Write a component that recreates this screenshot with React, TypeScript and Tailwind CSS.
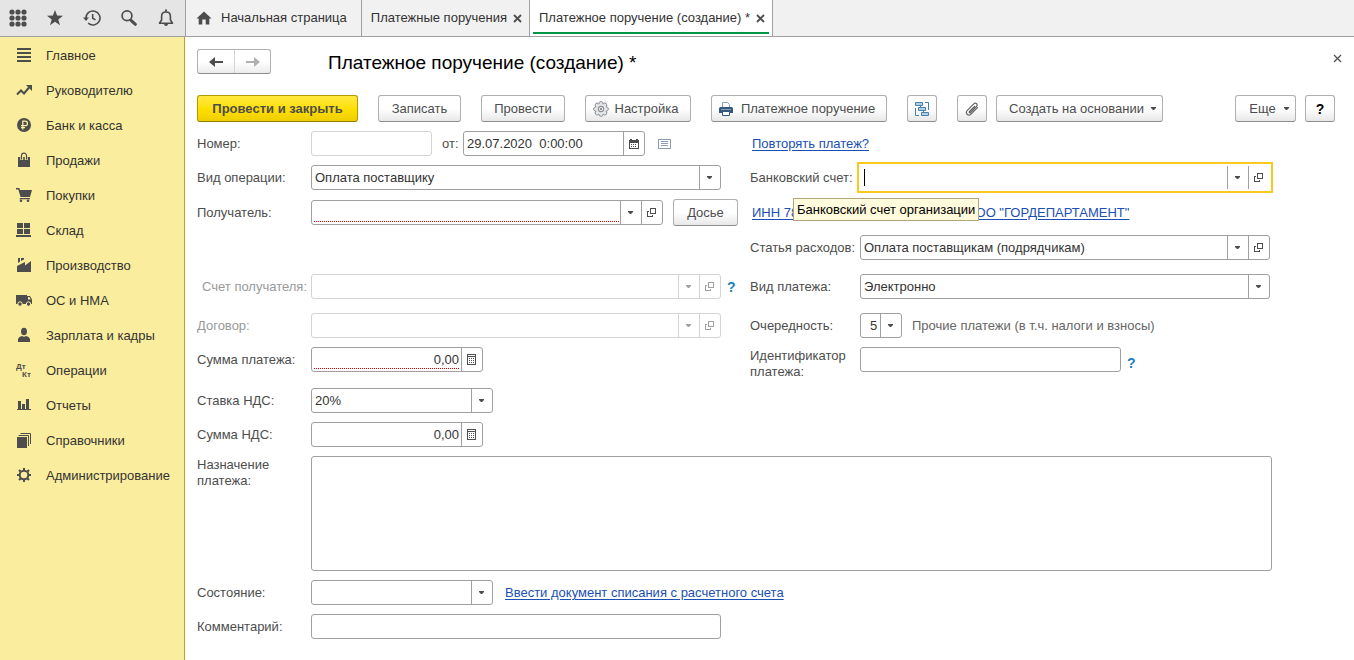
import { useState } from "react";
import type { ReactNode } from "react";
import clsx from "clsx";

const Icon = ({ size = 16, children, className }: { size?: number; children: ReactNode; className?: string }) => (
  <svg
    width={size}
    height={size}
    viewBox={`0 0 ${size} ${size}`}
    fill="currentColor"
    className={clsx("shrink-0", className)}
    aria-hidden="true"
  >
    {children}
  </svg>
);

const CaretIcon = () => (
  <svg width="5" height="3" viewBox="0 0 5 3" fill="currentColor" className="shrink-0" aria-hidden="true">
    <path d="M0 0h5v1L3 3H2L0 1z" />
  </svg>
);

const OpenIcon = () => (
  <Icon size={9}>
    <path d="M3 0h6v6H3zM4 1v4h4V1z" fillRule="evenodd" />
    <path d="M0 3h2v1H1v4h4V7h1v2H0z" />
  </Icon>
);

const CalcIcon = () => (
  <Icon size={11}>
    <path d="M1 0h9v11H1zM2 1v1h7V1zM2 3v7h7V3z" fillRule="evenodd" />
    <path d="M3 4h1v1H3zM5 4h1v1H5zM7 4h1v1H7zM3 6h1v1H3zM5 6h1v1H5zM7 6h1v1H7zM3 8h1v1H3zM5 8h1v1H5zM7 8h1v1H7z" />
  </Icon>
);

const CalendarIcon = () => (
  <Icon size={10}>
    <path d="M1 0h2v1h4V0h2v1h1v9H0V1h1zM1 4v5h8V4z" fillRule="evenodd" />
    <path d="M2 5h1v1H2zM4 5h1v1H4zM6 5h1v1H6zM2 7h1v1H2zM4 7h1v1H4zM6 7h1v1H6z" />
  </Icon>
);

const CloseIcon = ({ thin }: { thin?: boolean }) => (
  <svg
    width="9"
    height="9"
    viewBox="0 0 9 9"
    fill="none"
    stroke="#4d4d4d"
    strokeWidth={thin ? 1.2 : 1.8}
    aria-hidden="true"
  >
    <path d="M1 1l7 7M8 1L1 8" />
  </svg>
);

const topIcons = [
  {
    label: "Меню функций",
    icon: (
      <Icon size={18}>
        {[3, 9, 15].map((y) => [3, 9, 15].map((x) => <circle key={`${x}-${y}`} cx={x} cy={y} r="2.6" />))}
      </Icon>
    ),
  },
  {
    label: "Избранное",
    icon: (
      <Icon size={18}>
        <path d="M9 1l2.1 5.6 5.9.2-4.7 3.6 1.7 5.8L9 12.8l-5 3.4 1.7-5.8L1 6.800l5.900-.2z" />
      </Icon>
    ),
  },
  {
    label: "История",
    icon: (
      <Icon size={18}>
        <g fill="none" stroke="currentColor" strokeWidth="1.6">
          <path d="M3 9a7 7 0 1 1 2.2 5.1" />
          <path d="M9.7 5v4.3l2.8 1.6" />
        </g>
        <path d="M0 8.4h6L3 12z" />
      </Icon>
    ),
  },
  {
    label: "Поиск",
    icon: (
      <Icon size={18}>
        <circle cx="7" cy="6.8" r="4.9" fill="none" stroke="currentColor" strokeWidth="1.7" />
        <path d="M11 11.300l4.400 4" stroke="currentColor" strokeWidth="3" strokeLinecap="round" />
      </Icon>
    ),
  },
  {
    label: "Уведомления",
    icon: (
      <Icon size={18}>
        <path
          d="M2.5 14.2L4.6 11V7.2C4.6 4.6 6.5 3 9 3s4.4 1.6 4.4 4.2V11l2.1 3.2z"
          fill="none"
          stroke="currentColor"
          strokeWidth="1.6"
          strokeLinejoin="round"
        />
        <path d="M8 .5h2v2H8zM7 15h4a2 2 0 0 1-4 0z" />
      </Icon>
    ),
  },
];

const menu = [
  {
    name: "Главное",
    icon: <path d="M1 1h14v2H1zM1 5h14v2H1zM1 9h14v2H1zM1 13h14v2H1z" />,
  },
  {
    name: "Руководителю",
    icon: (
      <>
        <path d="M1 12.5l4-4 3 3 5-6" fill="none" stroke="currentColor" strokeWidth="2" />
        <path d="M10 3h6v6z" />
      </>
    ),
  },
  {
    name: "Банк и касса",
    icon: (
      <>
        <circle cx="8" cy="8" r="7" />
        <path d="M6.8 12.5V4.2h2.4a2.2 2.2 0 0 1 0 4.4H5M5 10.6h4" fill="none" stroke="#fbed9e" strokeWidth="1.3" />
      </>
    ),
  },
  {
    name: "Продажи",
    icon: (
      <>
        <path d="M2 5h12v10H2z" />
        <path d="M5.7 8V3.5a2.3 2.3 0 0 1 4.6 0V8" fill="none" stroke="#fbed9e" strokeWidth="3" />
        <path d="M5.5 7.5V3.6a2.5 2.5 0 0 1 5 0v3.9" fill="none" stroke="currentColor" strokeWidth="1.2" />
      </>
    ),
  },
  {
    name: "Покупки",
    icon: (
      <>
        <path d="M0 1h3.4l.6 2h12l-2 7H4.6L2.3 2.5H0zM4 11h10v1.2H3.5z" />
        <circle cx="5" cy="13.8" r="1.3" />
        <circle cx="12" cy="13.8" r="1.3" />
      </>
    ),
  },
  {
    name: "Склад",
    icon: <path d="M1 1h6v5H1zM8 1h6v5H8zM1 7h6v5H1zM8 7h6v5H8zM0 13h15v2H0z" />,
  },
  {
    name: "Производство",
    icon: <path d="M1 15V9l8-4v3.500L15 4v11zM2 1h2v3.500L2 6zM5 1h3v1.500L5 4z" />,
  },
  {
    name: "ОС и НМА",
    icon: (
      <>
        <path d="M0 3h11v9H0zM11 4h3l2 3.500V12h-5zM12 5v2.500h2.800L13.400 5z" fillRule="evenodd" />
        <g stroke="#fbed9e" strokeWidth="1">
          <circle cx="4" cy="12" r="2.200" />
          <circle cx="12.500" cy="12" r="2.200" />
        </g>
      </>
    ),
  },
  {
    name: "Зарплата и кадры",
    icon: (
      <>
        <ellipse cx="8" cy="4.5" rx="3" ry="3.8" />
        <path d="M2 15v-2.5C2 10.500 4 9.500 6 9q2 1.400 4 0c2 .5 4 1.500 4 3.500V15z" />
      </>
    ),
  },
  {
    name: "Операции",
    icon: (
      <g fontFamily="'Liberation Sans', Arial, sans-serif" fontWeight="bold" fontSize="8">
        <text x="0" y="7">
          Дт
        </text>
        <text x="6" y="15">
          Кт
        </text>
      </g>
    ),
  },
  {
    name: "Отчеты",
    icon: <path d="M2 4h3v8H2zM6 7h3v5H6zM10 2h3v10h-3zM1 12h14v1H1z" />,
  },
  {
    name: "Справочники",
    icon: (
      <>
        <path d="M1 5h10v11H1z" />
        <path d="M2.500 3.500h10V14M4.500 1.500h10V12" fill="none" stroke="currentColor" strokeWidth="1" />
      </>
    ),
  },
  {
    name: "Администрирование",
    icon: (
      <>
        <circle cx="8" cy="8" r="4.300" fill="none" stroke="currentColor" strokeWidth="2" />
        <path
          d="M8 1v3M8 12v3M1 8h3M12 8h3M3 3l2 2M11 11l2 2M13 3l-2 2M5 11l-2 2"
          stroke="currentColor"
          strokeWidth="2"
        />
      </>
    ),
  },
];

const Tab = ({ active, children }: { active?: boolean; children: ReactNode }) => (
  <div
    className={clsx(
      "flex h-9 items-stretch border-r border-[#a0a0a0] px-[3px] whitespace-nowrap",
      active ? "bg-white" : "bg-[#f1f1f1]",
    )}
  >
    <div
      className={clsx(
        "mb-[2px] flex items-center gap-[6px] border-b-2 px-[6px] pt-[4px]",
        active ? "border-[#009646]" : "border-transparent",
      )}
    >
      {children}
    </div>
  </div>
);

const Header = () => (
  <header className="flex h-[37px] border-b border-[#a0a0a0] bg-[#f1f1f1] text-[#333]">
    <div className="flex w-[185px] shrink-0 bg-[#e5e5e5] text-[#4d4d4d]">
      {topIcons.map((t) => (
        <button key={t.label} aria-label={t.label} className="flex w-[37px] items-center justify-center pr-px">
          {t.icon}
        </button>
      ))}
    </div>
    <nav className="flex border-l border-[#a0a0a0]">
      <Tab>
        <a href="#home" className="flex items-center gap-2 pr-[5px]">
          <Icon size={18} className="text-[#4d4d4d]">
            <path d="M9 2.500l7.500 7h-2.200V15.500h-3.600V10.500H7.300v5H3.700V9.500H1.500z" />
          </Icon>
          Начальная страница
        </a>
      </Tab>
      <Tab>
        <a href="#orders">Платежные поручения</a>
        <button aria-label="Закрыть вкладку" className="-mr-[2px]">
          <CloseIcon />
        </button>
      </Tab>
      <Tab active>
        <a href="#new">Платежное поручение (создание) *</a>
        <button aria-label="Закрыть вкладку" className="-mr-[2px]">
          <CloseIcon />
        </button>
      </Tab>
    </nav>
  </header>
);

const Sidebar = () => (
  <nav className="w-[185px] shrink-0 border-r border-[#b8a51e] bg-[#fbed9e] pt-px text-[#333]">
    {menu.map((m) => (
      <a key={m.name} href="#section" className="flex h-[35px] items-center gap-[14px] pl-4 whitespace-nowrap">
        <Icon className="mb-px text-[#4d4d4d]">{m.icon}</Icon>
        {m.name}
      </a>
    ))}
  </nav>
);

const Button = ({
  children,
  className,
  label,
  primary,
}: {
  children: ReactNode;
  className?: string;
  label?: string;
  primary?: boolean;
}) => (
  <button
    type="button"
    aria-label={label}
    className={clsx(
      "flex h-[27px] shrink-0 items-center justify-center rounded-[3px] border whitespace-nowrap",
      primary
        ? "border-[#b09a00] border-b-[#8f7d00] bg-linear-to-b from-[#ffe93b] via-[#ffe000] to-[#efce00] font-bold"
        : "border-[#b0b0b0] border-b-[#8c8c8c] bg-linear-to-b from-white via-white to-[#e8e8e8]",
      className,
    )}
  >
    {children}
  </button>
);

const gearPetals = [0, 45, 90, 135, 180, 225, 270, 315];

const Toolbar = () => (
  <div className="mt-[21px] flex items-center">
    <Button primary className="w-[161px]">
      Провести и закрыть
    </Button>
    <Button className="ml-5 w-[83px]">Записать</Button>
    <Button className="ml-5 w-[84px]">Провести</Button>
    <Button className="ml-5 w-[106px] gap-[6px] pr-[5px]">
      <Icon className="text-[#8d9299]">
        {gearPetals.map((a) => (
          <circle
            key={a}
            cx="8"
            cy="2.6"
            r="2"
            fill="#e4e6e9"
            stroke="currentColor"
            transform={`rotate(${a} 8 8)`}
          />
        ))}
        <circle cx="8" cy="8" r="5.3" fill="#e4e6e9" />
        <circle cx="8" cy="8" r="2.600" fill="#fff" stroke="currentColor" strokeWidth="1.200" />
        <circle cx="8" cy="8" r="1.200" />
      </Icon>
      Настройка
    </Button>
    <Button className="ml-5 w-[176px] gap-[7px] pr-[5px]">
      <Icon className="text-[#34597f]">
        <path d="M4.500 6V1.500h5l2 2V6" fill="#fff" stroke="#8aa1b8" />
        <path d="M1 7.500C1 6.500 2 6 3 6h10c1 0 2 .5 2 1.500V12H1z" />
        <path d="M3 8h10v1H3z" fill="#8aa1b8" />
        <path d="M4.500 10.500h7v4h-7z" fill="#fff" stroke="currentColor" />
      </Icon>
      Платежное поручение
    </Button>
    <Button className="ml-5 w-[30px]" label="Структура подчиненности">
      <Icon className="text-[#4580aa]">
        <g fill="#b5d0e4" stroke="currentColor">
          <path d="M1.500 1.500h7v3h-7zM4.500 6.500h7v3h-7zM7.500 11.500h7v3h-7z" />
          <path d="M11 1.500h3.500V9M1.500 7v7.500H5M6.500 4.500v2M9.500 9.500v2" fill="none" />
        </g>
      </Icon>
    </Button>
    <Button className="ml-5 w-[30px]" label="Присоединенные файлы">
      <Icon>
        <path
          d="M10.500 5.500l-5 5c-.8.800.2 1.800 1 1l6-6c2-2-.8-4.500-2.700-2.600L3.300 9.400c-2.700 2.700 1 6.400 3.700 3.700l6.500-6.500"
          fill="none"
          stroke="#666"
          strokeWidth="1.200"
          strokeLinecap="round"
        />
      </Icon>
    </Button>
    <Button className="ml-[9px] w-[167px] gap-[7px] pl-[6px]">
      Создать на основании
      <CaretIcon />
    </Button>
    <Button className="ml-auto w-[61px] gap-[8px] pl-[7px]">
      Еще
      <CaretIcon />
    </Button>
    <Button className="ml-[9px] w-[30px] text-sm font-bold text-black" label="Справка">
      ?
    </Button>
  </div>
);

const cell = "flex w-[21px] shrink-0 items-center justify-center border-l pr-px";

type FieldProps = {
  id: string;
  value?: string;
  className?: string;
  disabled?: boolean;
  required?: boolean;
  focused?: boolean;
  right?: boolean;
  buttons?: ("list" | "open" | "calc" | "date")[];
};

const buttonKinds = {
  list: { label: "Выбрать из списка", icon: <CaretIcon /> },
  open: { label: "Открыть", icon: <OpenIcon /> },
  calc: { label: "Калькулятор", icon: <CalcIcon /> },
  date: { label: "Календарь", icon: <CalendarIcon /> },
};

const Field = ({ id, value = "", className, disabled, required, focused, right, buttons = [] }: FieldProps) => {
  const [text, setText] = useState(value);
  const line = disabled ? "border-[#d4d4d4] text-[#a0a0a0]" : "border-[#a0a0a0] text-[#4d4d4d]";

  return (
    <div
      className={clsx(
        "flex h-[25px] items-stretch bg-white",
        focused
          ? "border border-white outline-2 outline-offset-1 outline-[#fcc81e]"
          : clsx("rounded-[3px] border", line),
        className,
      )}
    >
      {focused && <span className="my-[3px] ml-[3px] w-px bg-black" />}
      <input
        id={id}
        value={text}
        disabled={disabled}
        onChange={(e) => setText(e.target.value)}
        className={clsx(
          "w-0 min-w-0 grow text-[#333] outline-none",
          right && "text-right",
          required
            ? "mr-px mb-[2px] ml-[2px] bg-[repeating-linear-gradient(90deg,#e60000_0px,#e60000_1px,#ffffff_1px,#ffffff_2px)] bg-[length:100%_1px] bg-bottom bg-no-repeat pt-[2px] pr-px"
            : "bg-transparent pr-[2px] pl-[3px]",
        )}
      />
      {buttons.map((b) => (
        <button key={b} type="button" disabled={disabled} aria-label={buttonKinds[b].label} className={clsx(cell, line)}>
          {buttonKinds[b].icon}
        </button>
      ))}
    </div>
  );
};

const Select = ({ id, value = "", className, right }: { id: string; value?: string; className?: string; right?: boolean }) => (
  <div
    className={clsx(
      "grid h-[25px] grid-cols-[1fr_21px] rounded-[3px] border border-[#a0a0a0] bg-white text-[#4d4d4d]",
      className,
    )}
  >
    <select
      id={id}
      defaultValue={value}
      className={clsx(
        "col-span-2 col-start-1 row-start-1 appearance-none bg-transparent text-[#333] outline-none",
        right ? "pl-[9px]" : "pl-[3px]",
      )}
    >
      <option>{value}</option>
    </select>
    <span className={clsx(cell, "pointer-events-none col-start-2 row-start-1 border-[#a0a0a0]")}>
      <CaretIcon />
    </span>
  </div>
);

const Row = ({
  id,
  label,
  children,
  className,
  labelClass = "w-[114px]",
}: {
  id: string;
  label: string;
  children: ReactNode;
  className?: string;
  labelClass?: string;
}) => (
  <div className={clsx("flex h-[25px] items-center whitespace-nowrap", className)}>
    <label htmlFor={id} className={clsx("shrink-0", labelClass)}>
      {label}
    </label>
    {children}
  </div>
);

const link = "text-[#1a50b4] underline underline-offset-2";
const rightLabel = "w-[110px]";

const Help = () => (
  <button type="button" aria-label="Подсказка" className="ml-[6px] w-[8px] text-sm font-bold text-[#1a80c4]">
    ?
  </button>
);

const PaymentForm = () => (
  <form className="mt-[9px] mr-[63px] grid grid-cols-[553fr_522fr] gap-y-[9px]">
    <div>
      <Row id="number" label="Номер:">
        <Field id="number" disabled className="w-[121px]" />
        <label htmlFor="date" className="w-[31px] pl-[10px]">
          от:
        </label>
        <Field id="date" value="29.07.2020  0:00:00" className="w-[182px]" buttons={["date"]} />
        <button type="button" aria-label="Реквизиты" className="ml-[13px] text-[#8d9db0]">
          <svg width="13" height="10" viewBox="0 0 13 10" fill="currentColor" aria-hidden="true">
            <path d="M0 0h13v10H0zM1 1v8h11V1z" fillRule="evenodd" />
            <path d="M3 2h7v1H3zM3 4h7v1H3zM3 6h7v1H3z" />
          </svg>
        </button>
      </Row>
      <Row id="operation" label="Вид операции:" className="mt-[9px] pr-[29px]">
        <Select id="operation" value="Оплата поставщику" className="grow" />
      </Row>
      <Row id="payee" label="Получатель:" className="mt-[10px] pr-[12px]">
        <Field id="payee" required className="grow" buttons={["list", "open"]} />
        <Button className="ml-[10px] w-[65px]">Досье</Button>
      </Row>
      <Row
        id="payee-account"
        label="Счет получателя:"
        className="mt-[49px] pr-[15px] text-[#999]"
        labelClass="w-[114px] pl-[5px]"
      >
        <Field id="payee-account" disabled className="grow" buttons={["list", "open"]} />
        <Help />
      </Row>
      <Row id="contract" label="Договор:" className="mt-[14px] pr-[29px] text-[#999]">
        <Field id="contract" disabled className="grow" buttons={["list", "open"]} />
      </Row>
      <Row id="amount" label="Сумма платежа:" className="mt-[9px]">
        <Field id="amount" value="0,00" required right className="w-[172px]" buttons={["calc"]} />
      </Row>
      <Row id="vat-rate" label="Ставка НДС:" className="mt-[16px]">
        <Select id="vat-rate" value="20%" className="w-[182px]" />
      </Row>
      <Row id="vat" label="Сумма НДС:" className="mt-[9px]">
        <Field id="vat" value="0,00" right className="w-[172px]" buttons={["calc"]} />
      </Row>
    </div>

    <div className="pr-[2px]">
      <div className="flex h-[25px] items-center pl-[2px]">
        <a href="#repeat" className={link}>
          Повторять платеж?
        </a>
      </div>
      <Row id="account" label="Банковский счет:" className="relative mt-[9px]" labelClass={rightLabel}>
        <Field id="account" focused className="grow" buttons={["list", "open"]} />
        <div
          role="tooltip"
          className="absolute top-[33px] left-[43px] z-10 border border-[#b0a67c] bg-[#fffbdc] px-[3px] leading-[21px] text-black"
        >
          Банковский счет организации
        </div>
      </Row>
      <div className="mt-[10px] flex h-[25px] items-center pl-[2px] whitespace-nowrap">
        <a href="#company" className={link}>
          ИНН 7800000000, КПП 780000000, ООО "ГОРДЕПАРТАМЕНТ"
        </a>
      </div>
      <Row id="expense" label="Статья расходов:" className="mt-[10px]" labelClass={rightLabel}>
        <Field id="expense" value="Оплата поставщикам (подрядчикам)" className="grow" buttons={["list", "open"]} />
      </Row>
      <Row id="kind" label="Вид платежа:" className="mt-[14px]" labelClass={rightLabel}>
        <Select id="kind" value="Электронно" className="grow" />
      </Row>
      <Row id="priority" label="Очередность:" className="mt-[14px]" labelClass={rightLabel}>
        <Select id="priority" value="5" right className="w-[42px]" />
        <span className="ml-[10px] text-[#666]">Прочие платежи (в т.ч. налоги и взносы)</span>
      </Row>
      <div className="mt-[9px] flex items-start">
        <label htmlFor="uin" className="w-[110px] shrink-0 pt-px leading-4">
          Идентификатор платежа:
        </label>
        <Field id="uin" className="w-[261px]" />
        <span className="pt-[6px]">
          <Help />
        </span>
      </div>
    </div>

    <div className="col-span-2 flex items-start">
      <label htmlFor="purpose" className="w-[114px] shrink-0 pt-px leading-4">
        Назначение
        <br />
        платежа:
      </label>
      <textarea
        id="purpose"
        className="h-[115px] grow resize-none rounded-[3px] border border-[#a0a0a0] bg-white px-[3px] py-1 text-[#333] outline-none"
      />
    </div>
    <Row id="state" label="Состояние:" className="col-span-2">
      <Select id="state" className="w-[182px]" />
      <a href="#writeoff" className={clsx(link, "ml-[12px]")}>
        Ввести документ списания с расчетного счета
      </a>
    </Row>
    <Row id="comment" label="Комментарий:" className="pr-[29px]">
      <Field id="comment" className="grow" />
    </Row>
  </form>
);

export default function App() {
  return (
    <div className="flex min-h-screen flex-col bg-white font-['Liberation_Sans',Arial,sans-serif] text-[13px] text-[#4d4d4d]">
      <Header />
      <div className="flex grow">
        <Sidebar />
        <main className="min-w-0 grow pt-3 pr-[19px] pl-3">
          <div className="flex h-[25px] items-center">
            <div className="flex h-[25px] rounded-[3px] border border-[#b0b0b0] border-b-[#8c8c8c] bg-linear-to-b from-white via-white to-[#ececec]">
              <button type="button" aria-label="Назад" className="flex w-[36px] items-center justify-center">
                <Icon>
                  <path d="M1 8l6-5v4h8v2H7v4z" />
                </Icon>
              </button>
              <button
                type="button"
                aria-label="Вперед"
                className="flex w-[36px] items-center justify-center border-l border-[#d4d4d4] text-[#b0b0b0]"
              >
                <Icon>
                  <path d="M15 8L9 3v4H1v2h8v4z" />
                </Icon>
              </button>
            </div>
            <h1 className="ml-[57px] pt-[3px] text-[19px] text-black">Платежное поручение (создание) *</h1>
            <button type="button" aria-label="Закрыть" className="mr-[-7px] mb-[6px] ml-auto">
              <CloseIcon thin />
            </button>
          </div>
          <Toolbar />
          <PaymentForm />
        </main>
      </div>
    </div>
  );
}
